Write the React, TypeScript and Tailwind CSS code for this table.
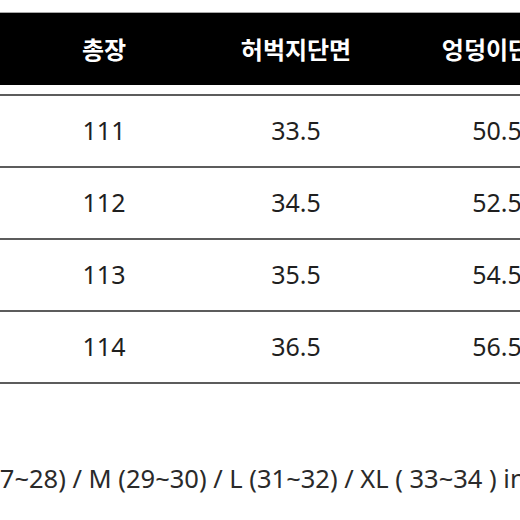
const columns = [
  { label: '총장', width: 'w-[208px]' },
  { label: '허벅지단면', width: 'w-[176px]' },
  { label: '엉덩이단면', width: 'w-[226px]' },
];

const rows = [
  ['111', '33.5', '50.5'],
  ['112', '34.5', '52.5'],
  ['113', '35.5', '54.5'],
  ['114', '36.5', '56.5'],
];

export default function App() {
  return (
    <div
      className="w-[520px] h-[520px] bg-white overflow-hidden"
      style={{ fontFamily: '"Noto Sans", "Noto Sans CJK KR", sans-serif' }}
    >
      <div className="pt-3">
        <div className="border-t border-[#a8a8a8]" />
        <div className="h-[72px] bg-black flex items-center">
          {columns.map((c) => (
            <div
              key={c.label}
              className={`${c.width} shrink-0 text-center text-white text-[24px] font-semibold whitespace-nowrap`}
              style={{ fontFamily: '"Noto Sans CJK KR", sans-serif' }}
            >
              {c.label}
            </div>
          ))}
        </div>
        <div className="h-[9px]" />
        <div className="border-b-2 border-[#5c5c5c]" />
        {rows.map((r) => (
          <div key={r[0]} className="h-[72px] flex items-center border-b-2 border-[#5c5c5c]">
            {r.map((v, i) => (
              <div
                key={i}
                className={`${columns[i].width} shrink-0 text-center text-[25px] text-[#1f1f1f] whitespace-nowrap`}
              >
                {v}
              </div>
            ))}
          </div>
        ))}
      </div>
      <div className="mt-[75px] whitespace-nowrap text-[25.5px] text-[#2a2a2a] ml-[-43px]">
        S (27~28) / M (29~30) / L (31~32) / XL ( 33~34 ) inch
      </div>
    </div>
  );
}
